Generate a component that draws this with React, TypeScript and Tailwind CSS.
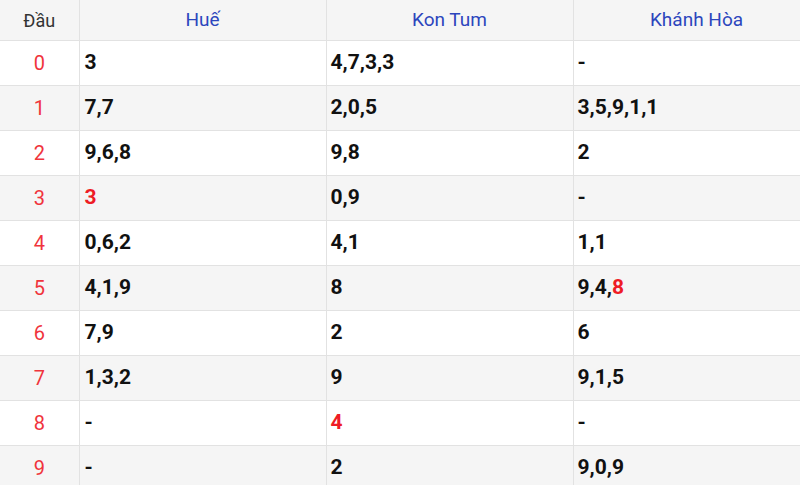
import React from "react";

type Cell = { v: string; hot?: boolean }[];

const rows: { head: string; hue: Cell; kontum: Cell; khanhhoa: Cell }[] = [
  { head: "0", hue: [{ v: "3" }], kontum: [{ v: "4,7,3,3" }], khanhhoa: [{ v: "-" }] },
  { head: "1", hue: [{ v: "7,7" }], kontum: [{ v: "2,0,5" }], khanhhoa: [{ v: "3,5,9,1,1" }] },
  { head: "2", hue: [{ v: "9,6,8" }], kontum: [{ v: "9,8" }], khanhhoa: [{ v: "2" }] },
  { head: "3", hue: [{ v: "3", hot: true }], kontum: [{ v: "0,9" }], khanhhoa: [{ v: "-" }] },
  { head: "4", hue: [{ v: "0,6,2" }], kontum: [{ v: "4,1" }], khanhhoa: [{ v: "1,1" }] },
  { head: "5", hue: [{ v: "4,1,9" }], kontum: [{ v: "8" }], khanhhoa: [{ v: "9,4," }, { v: "8", hot: true }] },
  { head: "6", hue: [{ v: "7,9" }], kontum: [{ v: "2" }], khanhhoa: [{ v: "6" }] },
  { head: "7", hue: [{ v: "1,3,2" }], kontum: [{ v: "9" }], khanhhoa: [{ v: "9,1,5" }] },
  { head: "8", hue: [{ v: "-" }], kontum: [{ v: "4", hot: true }], khanhhoa: [{ v: "-" }] },
  { head: "9", hue: [{ v: "-" }], kontum: [{ v: "2" }], khanhhoa: [{ v: "9,0,9" }] },
];

function Nums({ parts }: { parts: Cell }) {
  return (
    <>
      {parts.map((p, i) => (
        <span key={i} className={p.hot ? "text-[#ee1c25]" : "text-[#111]"}>
          {p.v}
        </span>
      ))}
    </>
  );
}

export default function App() {
  return (
    <div className="w-[800px] h-[485px] overflow-hidden bg-white" style={{ fontFamily: "Roboto, 'Noto Sans', sans-serif" }}>
      <table className="w-[820px] table-fixed border-collapse">
        <colgroup>
          <col className="w-[79px]" />
          <col className="w-[247px]" />
          <col className="w-[247px]" />
          <col className="w-[247px]" />
        </colgroup>
        <thead>
          <tr className="h-[40px] bg-[#f5f5f5]">
            <th className="border-r border-b border-[#e2e2e2] pt-[1px] text-[18px] font-normal text-[#333]">Đầu</th>
            <th className="border-x border-b border-[#e2e2e2] pt-[1px] text-[19px] font-normal text-[#2c46bd]">Huế</th>
            <th className="border-x border-b border-[#e2e2e2] pt-[1px] text-[19px] font-normal text-[#2c46bd]">Kon Tum</th>
            <th className="border-x border-b border-[#e2e2e2] pt-[1px] text-[19px] font-normal text-[#2c46bd]">Khánh Hòa</th>
          </tr>
        </thead>
        <tbody>
          {rows.map((r, i) => (
            <tr key={r.head} className={`h-[45px] ${i % 2 === 1 ? "bg-[#f5f5f5]" : "bg-white"}`}>
              <td className="border-r border-b border-[#e2e2e2] text-center text-[20px] text-[#f0343c]">{r.head}</td>
              <td className="border-x border-b border-[#e2e2e2] pl-[5px] text-[21px] font-bold">
                <Nums parts={r.hue} />
              </td>
              <td className="border-x border-b border-[#e2e2e2] pl-[4px] text-[21px] font-bold">
                <Nums parts={r.kontum} />
              </td>
              <td className="border-x border-b border-[#e2e2e2] pl-[4px] text-[21px] font-bold">
                <Nums parts={r.khanhhoa} />
              </td>
            </tr>
          ))}
        </tbody>
      </table>
    </div>
  );
}
